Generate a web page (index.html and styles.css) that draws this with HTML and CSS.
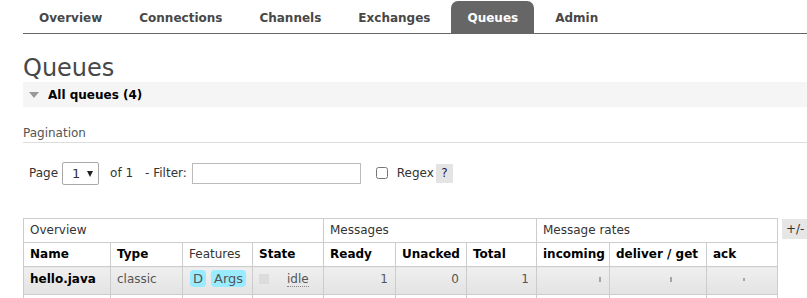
FILE: index.html
```html
<!DOCTYPE html>
<html lang="en">
<head>
  <meta charset="UTF-8">
  <title>Queues</title>
  <link rel="stylesheet" href="styles.css">
</head>
<body>

<ul class="tabs">
  <li><a href="#">Overview</a></li>
  <li><a href="#">Connections</a></li>
  <li><a href="#">Channels</a></li>
  <li><a href="#">Exchanges</a></li>
  <li class="active"><a href="#">Queues</a></li>
  <li><a href="#">Admin</a></li>
</ul>

<div class="main">
  <h1>Queues</h1>
  <div class="section-head"><span class="tri"></span>All queues (4)</div>

  <h3 class="sub">Pagination</h3>
  <div class="pager">
    <span>Page</span>
    <span class="select">
      <select><option>1</option></select>
    </span>
    <span class="of">of 1</span>
    <span class="filter-label">- Filter:</span>
    <input class="filter" type="text">
    <input class="regex" type="checkbox">
    <span class="regex-label">Regex</span>
    <span class="help">?</span>
  </div>

  <div class="table-wrap">
    <table class="list">
      <colgroup>
        <col class="w-name"><col class="w-type"><col class="w-feat"><col class="w-state">
        <col class="w-ready"><col class="w-unacked"><col class="w-total">
        <col class="w-in"><col class="w-deliver"><col class="w-ack">
      </colgroup>
      <thead>
        <tr class="group">
          <th colspan="4">Overview</th>
          <th colspan="3">Messages</th>
          <th colspan="3">Message rates</th>
        </tr>
        <tr class="cols">
          <th>Name</th>
          <th>Type</th>
          <th class="plain">Features</th>
          <th>State</th>
          <th>Ready</th>
          <th>Unacked</th>
          <th>Total</th>
          <th>incoming</th>
          <th>deliver / get</th>
          <th>ack</th>
        </tr>
      </thead>
      <tbody>
        <tr class="odd">
          <td class="name">hello.java</td>
          <td class="muted">classic</td>
          <td><span class="badges"><span class="badge">D</span><span class="badge">Args</span></span></td>
          <td><span class="state-box"></span><abbr class="state">idle</abbr></td>
          <td class="num">1</td>
          <td class="num">0</td>
          <td class="num">1</td>
          <td class="rate"><span class="spark s-in"></span></td>
          <td class="rate"><span class="spark s-deliver"></span></td>
          <td class="rate"><span class="spark s-ack"></span></td>
        </tr>
        <tr>
          <td class="name">hello.python</td>
          <td class="muted">classic</td>
          <td><span class="badges"><span class="badge">D</span><span class="badge">Args</span></span></td>
          <td><span class="state-box"></span><abbr class="state">idle</abbr></td>
          <td class="num">0</td>
          <td class="num">0</td>
          <td class="num">0</td>
          <td class="rate"></td>
          <td class="rate"></td>
          <td class="rate"></td>
        </tr>
      </tbody>
    </table>
    <span class="plusminus">+/-</span>
  </div>
</div>

</body>
</html>
```

FILE: styles.css
```css
html, body {
  margin: 0;
  overflow: hidden;
}
body {
  font-family: "DejaVu Sans", Verdana, sans-serif;
  font-size: 12px;
  color: #484848;
  background: #fff;
}

/* top menu */
.tabs {
  display: flex;
  list-style: none;
  margin: 0 0 0 23px;
  padding: 1px 0 0;
  border-bottom: 1px solid #666;
}
.tabs li {
  margin-right: 5px;
}
.tabs a {
  display: block;
  padding: 10px 16px 8px;
  line-height: 14px;
  font-weight: bold;
  color: #484848;
  text-decoration: none;
  border-radius: 7px 7px 0 0;
}
.tabs .active a {
  background-color: #666;
  color: #fff;
}

.main {
  padding-left: 23px;
}
h1 {
  margin: 21px 0 0;
  font-size: 24px;
  font-weight: normal;
  line-height: 27px;
  color: #484848;
}
.section-head {
  display: flex;
  align-items: center;
  height: 25px;
  padding-left: 6px;
  background-color: #f5f5f5;
  font-weight: bold;
  color: #000;
}
.tri {
  width: 0;
  height: 0;
  border-left: 5px solid transparent;
  border-right: 5px solid transparent;
  border-top: 6px solid #999;
  margin-right: 9px;
}
.sub {
  margin: 19px 0 0;
  padding-bottom: 1px;
  font-size: 12px;
  font-weight: normal;
  line-height: 15px;
  color: #555;
  border-bottom: 1px solid #ddd;
}

/* pagination row */
.pager {
  display: flex;
  align-items: center;
  height: 24px;
  margin-top: 18px;
  padding-left: 6px;
  color: #333;
}
.select {
  position: relative;
  margin-left: 4px;
}
.select select {
  appearance: none;
  -webkit-appearance: none;
  width: 37px;
  height: 23px;
  padding: 0 0 0 9px;
  border: 1px solid #a9a9a9;
  border-radius: 2px;
  background: #fff;
  font-family: inherit;
  font-size: 13px;
  color: #333;
}
.select::after {
  content: "";
  position: absolute;
  left: 25px;
  top: 9px;
  border-left: 3px solid transparent;
  border-right: 3px solid transparent;
  border-top: 6px solid #222;
  pointer-events: none;
}
.of {
  margin-left: 11px;
}
.filter-label {
  margin-left: 12px;
}
.filter {
  width: 169px;
  height: 21px;
  box-sizing: border-box;
  margin: 0 0 0 5px;
  border: 1px solid #bbb;
  padding: 0 4px;
}
.regex {
  width: 12px;
  height: 12px;
  margin: 0 0 0 15px;
}
.regex-label {
  margin-left: 9px;
}
.help {
  margin-left: 2px;
  width: 17px;
  height: 19px;
  line-height: 19px;
  text-align: center;
  background-color: #e4e4e4;
  color: #224;
}

/* queue table */
.table-wrap {
  display: flex;
  align-items: flex-start;
  margin-top: 33px;
}
.list {
  border-collapse: collapse;
  table-layout: fixed;
  width: 755px;
  flex-shrink: 0;
}
.w-name { width: 87px; }
.w-type { width: 72px; }
.w-feat { width: 70px; }
.w-state { width: 71px; }
.w-ready { width: 72px; }
.w-unacked { width: 71px; }
.w-total { width: 70px; }
.w-in { width: 73px; }
.w-deliver { width: 97px; }
.w-ack { width: 71px; }

.list th, .list td {
  border: 1px solid #ccc;
  padding: 0 6px;
  text-align: left;
  white-space: nowrap;
  overflow: hidden;
}
.list th {
  height: 23px;
  line-height: 23px;
  color: #000;
}
.list .group th {
  font-weight: normal;
  color: #333;
}
.list th.plain {
  font-weight: normal;
  color: #333;
}
.list td {
  padding: 3px 6px 6px;
  line-height: 17px;
  color: #555;
}
.list tr.odd td {
  background: linear-gradient(#efefef, #e3e3e3);
}
.list td.name {
  font-weight: bold;
  color: #000;
}
.list td.num {
  text-align: right;
  padding-right: 7px;
}
.badges {
  display: inline-flex;
  gap: 5px;
  margin-left: 1px;
  font-size: 13px;
}
.badge {
  display: inline-block;
  padding: 0 3px;
  border-radius: 4px;
  background-color: #99ebff;
  color: #555;
  line-height: 17px;
}
.state-box {
  display: inline-block;
  width: 10px;
  height: 10px;
  background-color: #dcdcdc;
  margin-right: 18px;
  vertical-align: -1px;
}
.state {
  text-decoration: none;
  border-bottom: 1px dotted #888;
  color: #555;
}
.spark {
  display: inline-block;
  width: 2px;
  height: 5px;
  background-color: #777;
  opacity: 0.6;
  vertical-align: middle;
}
.s-in { margin-left: 56px; }
.s-deliver { margin-left: 54px; }
.s-ack { margin-left: 30px; height: 3px; }

.plusminus {
  margin-left: 4px;
  margin-top: 1px;
  padding: 0 4px;
  height: 20px;
  line-height: 20px;
  background-color: #e6e6e6;
  color: #333;
  white-space: nowrap;
}
```
